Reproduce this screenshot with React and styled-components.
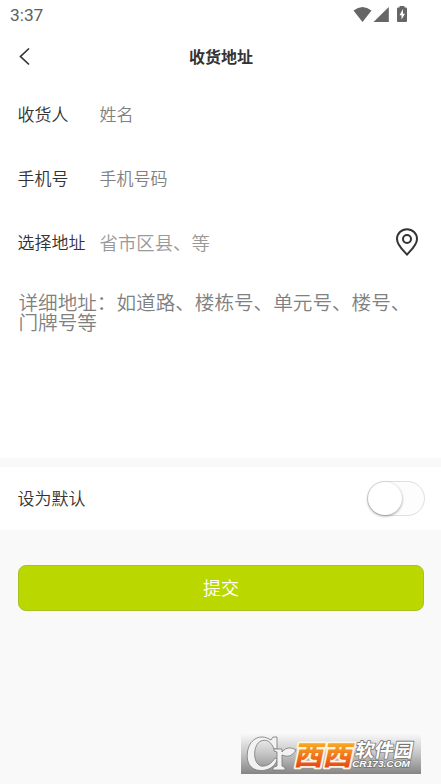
import React from "react";
import styled, { createGlobalStyle } from "styled-components";

const GlobalStyle = createGlobalStyle`
  * { box-sizing: border-box; }
  body { margin: 0; background: #f9f9f9; }
  button, input, textarea { font-family: inherit; font-weight: inherit; margin: 0; }
`;

const Screen = styled.div`
  width: 441px;
  height: 784px;
  overflow: hidden;
  display: flex;
  flex-direction: column;
  background: #f9f9f9;
  color: #333;
  font-family: "Noto Sans CJK SC", sans-serif;
  font-weight: 350;
`;

const StatusBar = styled.div`
  height: 30px;
  flex: none;
  display: flex;
  align-items: center;
  justify-content: space-between;
  padding: 0 33px 0 10px;
  background: #fff;
  color: #606060;
  font: 400 17.3px/30px Roboto, sans-serif;
`;

const StatusIcons = styled.svg`
  display: block;
  width: 56px;
  height: 30px;
`;

const NavBar = styled.header`
  height: 53px;
  flex: none;
  display: grid;
  grid-template-columns: 50px 1fr 50px;
  align-items: center;
  background: #fff;
`;

const BackButton = styled.button`
  height: 53px;
  padding: 0 0 0 17px;
  border: 0;
  background: none;
  svg { display: block; }
`;

const Title = styled.h1`
  margin: 0 0 0 1px;
  text-align: center;
  font-size: 16px;
  line-height: 53px;
  font-weight: 700;
  color: #333;
`;

const Form = styled.section`
  height: 375px;
  flex: none;
  display: flex;
  flex-direction: column;
  background: #fff;
`;

const Row = styled.div`
  height: 64px;
  display: flex;
  align-items: center;
  padding: 0 17px 0 17.5px;
  background: #fff;
`;

const Label = styled.label`
  width: 82px;
  flex: none;
  padding-bottom: 2px;
  font-size: 17px;
  line-height: 24px;
  white-space: nowrap;
`;

const Field = styled.input`
  flex: 1;
  min-width: 0;
  height: 40px;
  padding: 0 0 3px;
  border: 0;
  outline: 0;
  background: none;
  font-size: 17px;
  &::placeholder { color: #808080; opacity: 1; }
`;

const RegionValue = styled.span`
  flex: 1;
  padding-bottom: 2px;
  font-size: 18.4px;
  line-height: 28px;
  color: #999;
`;

const Pin = styled.svg`
  width: 24px;
  height: 28px;
  margin: 0 5px 2px 0;
`;

const Detail = styled.textarea`
  flex: 1;
  margin: 17px 17px 0 18.5px;
  padding: 0;
  border: 0;
  outline: 0;
  resize: none;
  overflow: hidden;
  background: none;
  font-size: 19.6px;
  line-height: 20px;
  &::placeholder { color: #808080; opacity: 1; }
`;

const DefaultRow = styled(Row)`
  height: 63px;
  flex: none;
  margin-top: 9px;
  padding-right: 16px;
  justify-content: space-between;
`;

const Switch = styled.button`
  width: 58px;
  height: 35px;
  padding: 0;
  border: 1px solid #dfdfdf;
  border-radius: 18px;
  background: #fdfdfd;
`;

const Knob = styled.span`
  display: block;
  width: 34px;
  height: 33px;
  border-radius: 50%;
  background: #fff;
  box-shadow: 0 1px 3px rgba(0, 0, 0, 0.4);
`;

const Submit = styled.button`
  height: 46px;
  flex: none;
  margin: 35px 17px 0 18px;
  padding: 0 0 2px;
  border: 1px solid #a9c223;
  border-radius: 8px;
  background: #bad800;
  color: #fff;
  font-size: 18px;
  line-height: 42px;
`;

const Watermark = styled.svg`
  display: block;
  flex: none;
  width: 180px;
  height: 44px;
  margin: auto 20px 10px auto;
`;

const rows = [
  { id: "name", label: "收货人", hint: "姓名" },
  { id: "phone", label: "手机号", hint: "手机号码" },
];

function SiteMark() {
  return (
    <Watermark viewBox="241 730 180 44">
      <defs>
        <linearGradient id="plate" x1="0" y1="0" x2="0" y2="1">
          <stop offset="0" stopColor="#f8f8f8" />
          <stop offset="0.5" stopColor="#c4c4c4" />
          <stop offset="1" stopColor="#858585" />
        </linearGradient>
        <linearGradient id="orange" gradientUnits="userSpaceOnUse" x1="0" y1="-25" x2="0" y2="0">
          <stop offset="0" stopColor="#f8b022" />
          <stop offset="1" stopColor="#e84718" />
        </linearGradient>
      </defs>
      <rect x="241" y="734" width="180" height="40" fill="url(#plate)" />
      <g fill="#f2f2f2" stroke="#777" strokeWidth="0.8" strokeLinejoin="round">
        <path
          d="M273 737H277V749H274C271 741 266 739 261 741C253 744 252 763 261 766C267 767 272 763 275 758L277.500 759C275 767 268 771 260 770.500C250 770 246 762 247.500 752C249 740 259 734 268 738.500L271 740Z"
        />
        <path d="M274 749H282V752C286 747 291 747 296 750C292 757 287 757 282 755V766L285 767.500V770H273V767.500L277 766V752L274 751Z" />
      </g>
      <g transform="translate(293 767) skewX(-12)" fontFamily="Noto Sans CJK SC, sans-serif" fontWeight="900" strokeLinejoin="round">
        <text x="0" y="-2" fontSize="27" textLength="58" lengthAdjust="spacingAndGlyphs" fill="url(#orange)" stroke="#fff4df" strokeWidth="3.5" paintOrder="stroke">西西</text>
      </g>
      <g transform="translate(354 758) skewX(-10)" fontFamily="Noto Sans CJK SC, sans-serif" fontWeight="700" fontSize="19" fill="#fff" stroke="#747474" strokeWidth="1.6" paintOrder="stroke" strokeLinejoin="round">
        <text x="0" y="-1" textLength="58" lengthAdjust="spacingAndGlyphs">软件园</text>
      </g>
      <text x="352" y="767" fontFamily="Liberation Sans, sans-serif" fontStyle="italic" fontWeight="700" fontSize="9.5" textLength="58" lengthAdjust="spacingAndGlyphs" fill="#fff" stroke="#747474" strokeWidth="1.4" paintOrder="stroke">CR173.COM</text>
    </Watermark>
  );
}

export default function App() {
  return (
    <>
      <GlobalStyle />
      <Screen>
        <StatusBar>
          <span>3:37</span>
          <StatusIcons viewBox="352 0 56 30" fill="#666">
            <path d="M353.500 10.500Q362.500 3.500 371.500 10.500L362.500 22Z" />
            <path d="M388.800 7V22H373.500Z" />
            <path d="M399.500 7.500V6h5v1.500h1.500q1 0 1 1V21q0 1-1 1h-8q-1 0-1-1V8.500q0-1 1-1z" />
            <path d="M403 9v4.800h2L401.500 19.500v-4.200h-2z" fill="#fff" />
          </StatusIcons>
        </StatusBar>
        <NavBar>
          <BackButton aria-label="返回">
            <svg width="16" height="20" viewBox="0 0 16 20" fill="none" stroke="#333" strokeWidth="1.7">
              <path d="M12 1.500 3.500 9.500 12 17.500" />
            </svg>
          </BackButton>
          <Title>收货地址</Title>
        </NavBar>
        <Form>
          {rows.map((row) => (
            <Row key={row.id}>
              <Label htmlFor={row.id}>{row.label}</Label>
              <Field id={row.id} placeholder={row.hint} />
            </Row>
          ))}
          <Row>
            <Label>选择地址</Label>
            <RegionValue>省市区县、等</RegionValue>
            <Pin viewBox="0 0 24 28" fill="none" stroke="#333" strokeWidth="2">
              <path d="M12 26.500C9 23 2 17.500 2 11A10 9.800 0 0 1 22 11C22 17.500 15 23 12 26.500Z" />
              <circle cx="12" cy="11" r="4" />
            </Pin>
          </Row>
          <Detail placeholder="详细地址：如道路、楼栋号、单元号、楼号、门牌号等" />
        </Form>
        <DefaultRow>
          <Label>设为默认</Label>
          <Switch role="switch" aria-checked="false">
            <Knob />
          </Switch>
        </DefaultRow>
        <Submit>提交</Submit>
        <SiteMark />
      </Screen>
    </>
  );
}
